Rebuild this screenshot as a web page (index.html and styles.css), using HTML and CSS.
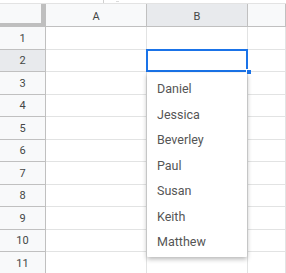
FILE: index.html
```html
<!DOCTYPE html>
<html lang="en">
<head>
    <meta charset="UTF-8">
    <title>Sheet - dropdown</title>
    <link rel="stylesheet" href="styles.css">
</head>
<body>
    <div class="toolbar-edge">
        <span class="tick"></span>
        <span class="dash"></span>
    </div>

    <div class="sheet">
        <div class="grid">
            <div class="corner"></div>
            <div class="col-head">A</div>
            <div class="col-head active">B</div>
            <div class="col-head"></div>

            <div class="row-head">1</div><div class="cell"></div><div class="cell"></div><div class="cell"></div>
            <div class="row-head active">2</div><div class="cell"></div><div class="cell"></div><div class="cell"></div>
            <div class="row-head">3</div><div class="cell"></div><div class="cell"></div><div class="cell"></div>
            <div class="row-head">4</div><div class="cell"></div><div class="cell"></div><div class="cell"></div>
            <div class="row-head">5</div><div class="cell"></div><div class="cell"></div><div class="cell"></div>
            <div class="row-head">6</div><div class="cell"></div><div class="cell"></div><div class="cell"></div>
            <div class="row-head">7</div><div class="cell"></div><div class="cell"></div><div class="cell"></div>
            <div class="row-head">8</div><div class="cell"></div><div class="cell"></div><div class="cell"></div>
            <div class="row-head">9</div><div class="cell"></div><div class="cell"></div><div class="cell"></div>
            <div class="row-head">10</div><div class="cell"></div><div class="cell"></div><div class="cell"></div>
            <div class="row-head">11</div><div class="cell"></div><div class="cell"></div><div class="cell"></div>
        </div>

        <!-- aktive Zelle B2 -->
        <div class="selection"></div>
        <div class="fill-handle"></div>

        <!-- Auswahlliste der Datenvalidierung -->
        <ul class="dropdown">
            <li>Daniel</li>
            <li>Jessica</li>
            <li>Beverley</li>
            <li>Paul</li>
            <li>Susan</li>
            <li>Keith</li>
            <li>Matthew</li>
        </ul>
    </div>
</body>
</html>
```

FILE: styles.css
```css
:root {
    --header-bg: #f8f9fa;
    --header-active: #e8eaed;
    --header-line: #c0c0c0;
    --grid-line: #e2e3e3;
    --blue: #1a73e8;
    --text: #444746;
}

* {
    margin: 0;
    padding: 0;
    box-sizing: border-box;
}

body {
    font-family: 'Roboto', 'Liberation Sans', sans-serif;
    background: #fff;
    width: 286px;
    height: 273px;
    overflow: hidden;
}

.toolbar-edge {
    height: 3px;
    position: relative;
}

.toolbar-edge .tick {
    position: absolute;
    left: 103px;
    top: 0;
    width: 1px;
    height: 3px;
    background: #d0d0d0;
}

.toolbar-edge .dash {
    position: absolute;
    left: 116px;
    top: 1px;
    width: 3px;
    height: 1px;
    background: #dcdcdc;
}

.sheet {
    position: relative;
    border-top: 1px solid #e3e3e3;
}

.grid {
    display: grid;
    grid-template-columns: 46px 101px 101px 38px;
    grid-template-rows: 23px;
    grid-auto-rows: 22.5px;
}

.corner {
    background: var(--header-bg);
    border-right: 5px solid #bfbfbf;
    border-bottom: 4px solid #bfbfbf;
}

.col-head {
    background: var(--header-bg);
    border-right: 1px solid var(--header-line);
    border-bottom: 1px solid var(--header-line);
    font-size: 11px;
    color: var(--text);
    display: flex;
    align-items: center;
    justify-content: center;
    padding-top: 3px;
}

.row-head {
    background: var(--header-bg);
    border-right: 1px solid var(--header-line);
    border-bottom: 1px solid var(--header-line);
    font-size: 11px;
    color: var(--text);
    display: flex;
    align-items: center;
    justify-content: center;
    padding-top: 1px;
}

.col-head.active,
.row-head.active {
    background: var(--header-active);
}

.cell {
    border-right: 1px solid var(--grid-line);
    border-bottom: 1px solid var(--grid-line);
}

.selection {
    position: absolute;
    left: 146px;
    top: 45px;
    width: 102px;
    height: 23px;
    border: 2px solid var(--blue);
}

.fill-handle {
    position: absolute;
    left: 246px;
    top: 65px;
    width: 5px;
    height: 5px;
    background: var(--blue);
    border-left: 1px solid #fff;
    border-top: 1px solid #fff;
}

.dropdown {
    position: absolute;
    left: 147px;
    top: 69px;
    width: 100px;
    list-style: none;
    background: #fff;
    padding: 2px 0 3px;
    box-shadow: 0 2px 5px rgba(0, 0, 0, 0.3);
    border-radius: 1px;
}

.dropdown li {
    height: 25.5px;
    line-height: 25.5px;
    padding-left: 10px;
    padding-top: 1px;
    font-size: 12.5px;
    color: #555;
}
```
